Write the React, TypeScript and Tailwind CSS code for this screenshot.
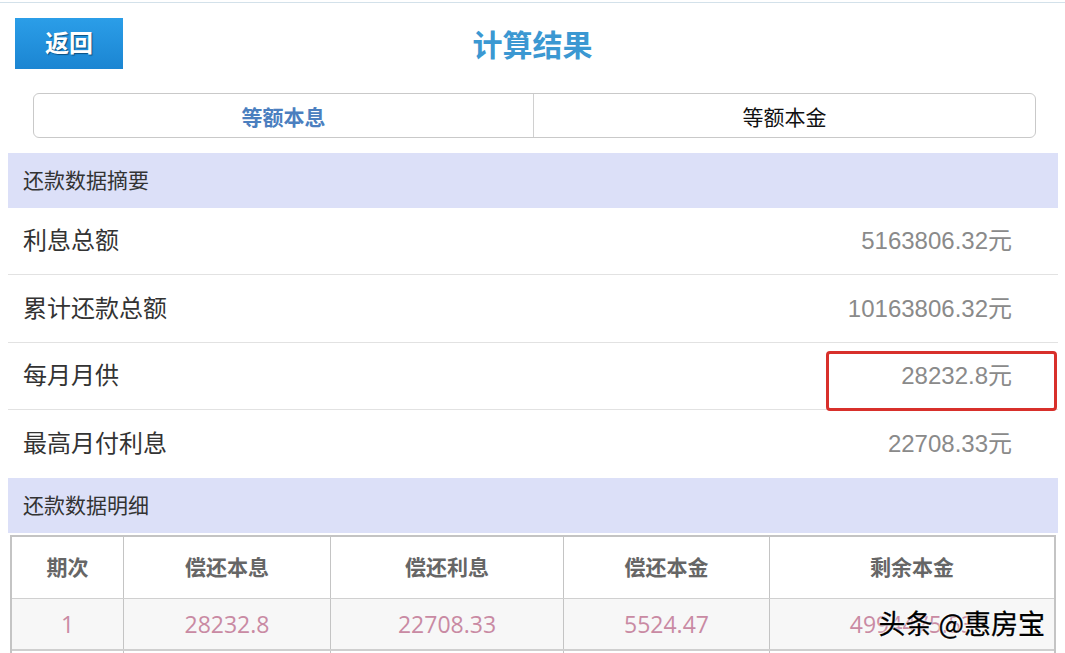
import React from "react";

const cjk = '"Liberation Sans", "Noto Sans CJK SC", sans-serif';

function SummaryRow({ label, value, highlight, last, h }: { label: string; value: string; highlight?: boolean; last?: boolean; h: string }) {
  return (
    <div className={`relative flex ${h} items-center justify-between pl-[15px] pr-[46px] ${last ? "" : "border-b border-[#e2e2e2]"}`}>
      <span className="text-[24px] text-[#333]">{label}</span>
      <span className="text-[24px] text-[#8a8a8a]">{value}</span>
      {highlight && (
        <div className="absolute right-[1px] top-[8px] h-[60px] w-[231px] rounded-[4px] border-[3px] border-[#d8302b]" />
      )}
    </div>
  );
}

export default function App() {
  const cols = ["w-[112px]", "w-[207px]", "w-[233px]", "w-[206px]", "flex-1"];
  const heads = ["期次", "偿还本息", "偿还利息", "偿还本金", "剩余本金"];
  const vals = ["1", "28232.8", "22708.33", "5524.47", "4994475.53"];
  return (
    <div className="h-[653px] w-[1065px] overflow-hidden bg-white" style={{ fontFamily: cjk }}>
      <div className="h-[2px]" />
      <div className="border-t border-[#d3e1ea]" />
      {/* header */}
      <div className="grid h-[82px] grid-cols-[1fr_auto_1fr] items-start">
        <div className="pl-[15px] pt-[15px]">
          <div className="flex h-[51px] w-[108px] items-center justify-center bg-gradient-to-b from-[#2b9ee8] to-[#1b85d2]">
            <span className="text-[24px] font-bold text-white" style={{ textShadow: "1px 1px 1px #0c4f80" }}>返回</span>
          </div>
        </div>
        <div className="pt-[23px] text-[30px] font-bold leading-[40px] text-[#3b98d2]">计算结果</div>
        <div />
      </div>
      {/* tabs */}
      <div className="ml-[33px] mr-[29px] mt-[8px] flex h-[45px] overflow-hidden rounded-[6px] border border-[#c9c9c9]">
        <div className="flex w-[500px] items-center justify-center border-r border-[#d0d0d0] pt-[4px] text-[21px] font-bold text-[#4b7fbf]">等额本息</div>
        <div className="flex flex-1 items-center justify-center pt-[4px] text-[21px] text-[#111]">等额本金</div>
      </div>
      {/* summary */}
      <div className="ml-[8px] mr-[7px] mt-[15px]">
        <div className="flex h-[55px] items-center bg-[#dce0f8] pl-[15px] text-[21px] text-[#333]">还款数据摘要</div>
        <SummaryRow h="h-[67px]" label="利息总额" value="5163806.32元" />
        <SummaryRow h="h-[68px]" label="累计还款总额" value="10163806.32元" />
        <SummaryRow h="h-[67px]" label="每月月供" value="28232.8元" highlight />
        <SummaryRow h="h-[68px]" label="最高月付利息" value="22708.33元" last />
        <div className="flex h-[55px] items-center bg-[#dce0f8] pl-[15px] text-[21px] text-[#333]">还款数据明细</div>
      </div>
      {/* table */}
      <div className="relative ml-[10px] mr-[9px] mt-[2px] border-2 border-b-0 border-[#c4c4c4]">
        <div className="flex h-[62px] border-b border-[#d0d0d0] bg-white">
          {heads.map((h, i) => (
            <div key={h} className={`${cols[i]} flex items-center justify-center pt-[1px] text-[21px] font-bold text-[#666] ${i < 4 ? "border-r border-[#c4c4c4]" : ""}`}>{h}</div>
          ))}
        </div>
        <div className="flex h-[52px] border-b-2 border-[#cfcfcf] bg-[#f7f7f7]">
          {vals.map((v, i) => (
            <div key={i} className={`${cols[i]} flex items-center justify-center text-[23px] text-[#c98aa3] ${i < 4 ? "border-r border-[#c4c4c4]" : ""}`} style={{ fontFamily: '"Open Sans", "Noto Sans CJK SC", sans-serif' }}>{v}</div>
          ))}
        </div>
        <div className="flex h-[20px] bg-white">
          {cols.map((c, i) => (
            <div key={i} className={`${c} ${i < 4 ? "border-r border-[#c4c4c4]" : ""}`} />
          ))}
        </div>
        <div
          className="absolute right-[9px] top-[69px] text-[27px] leading-[34px] text-black"
          style={{ fontFamily: '"Noto Sans CJK SC", sans-serif', WebkitTextStroke: "0.3px #000", textShadow: "0 0 2px #fff, 0 0 2px #fff, 0 0 3px #fff" }}
        >
          头条 @惠房宝
        </div>
      </div>
    </div>
  );
}
